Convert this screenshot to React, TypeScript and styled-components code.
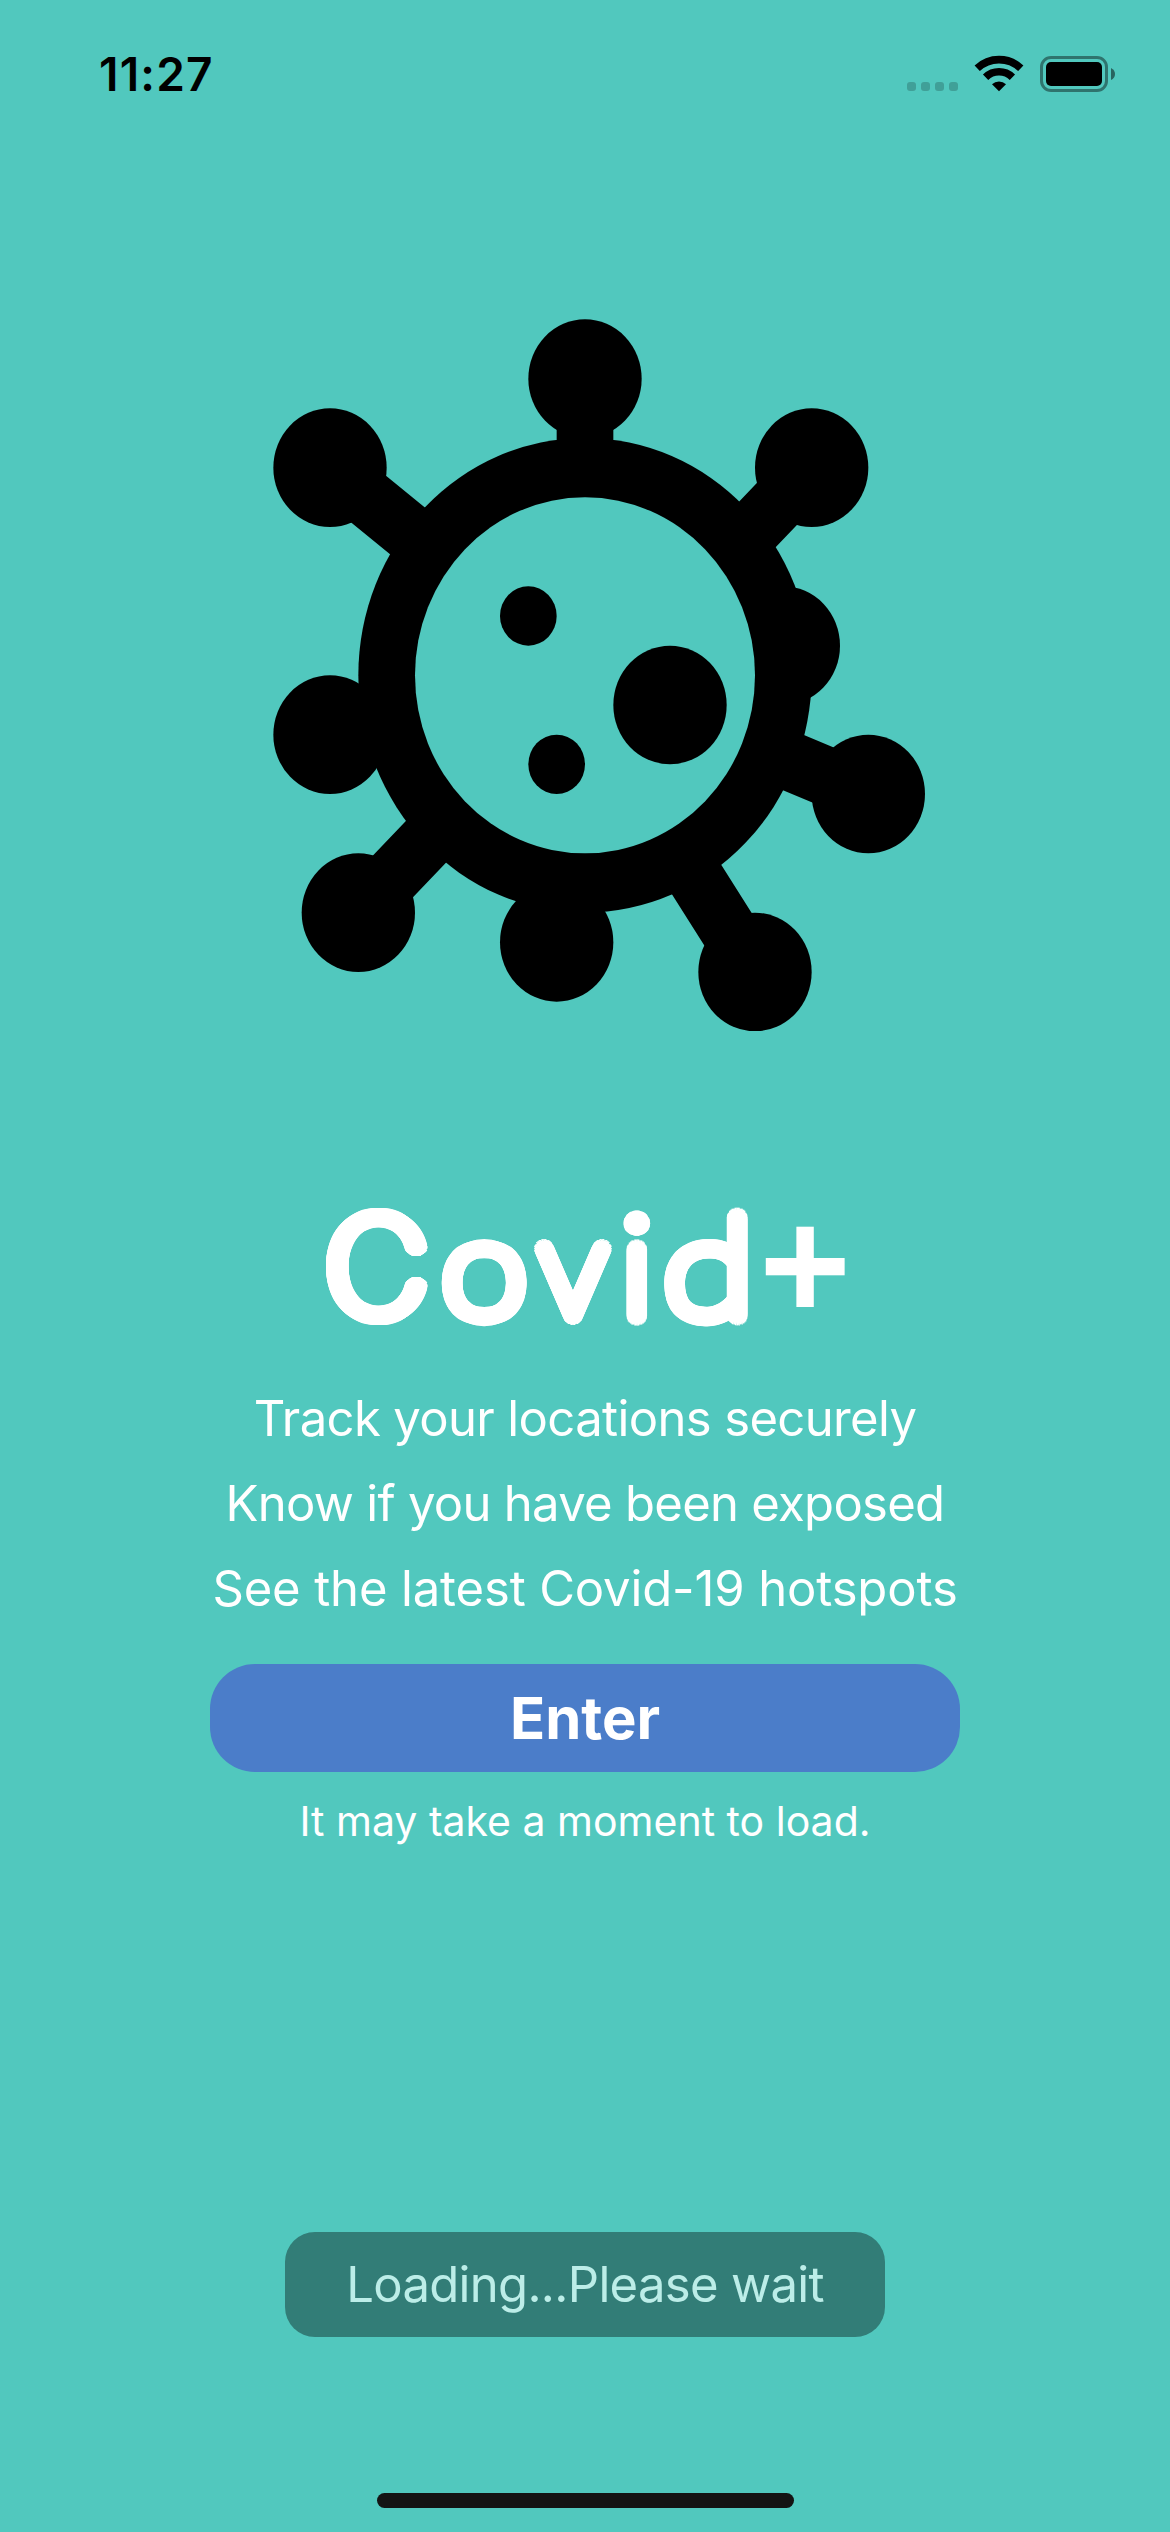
import React from "react";
import styled, { createGlobalStyle } from "styled-components";

const GlobalStyle = createGlobalStyle`
  * { box-sizing: border-box; }
  html, body { margin: 0; padding: 0; background: #51c8be; }
`;

const Screen = styled.main`
  width: 1170px;
  height: 2532px;
  display: flex;
  flex-direction: column;
  align-items: center;
  overflow: hidden;
  background: #51c8be;
  color: #ffffff;
  font-family: Inter, "Liberation Sans", sans-serif;
`;

const StatusBar = styled.header`
  width: 100%;
  height: 148px;
  padding: 45px 54px 0 99px;
  display: flex;
  justify-content: space-between;
  align-items: flex-start;
`;

const Clock = styled.time`
  color: #000000;
  font-size: 46px;
  font-weight: 600;
  line-height: 58px;
  letter-spacing: 1.2px;
`;

const StatusIcons = styled.svg`
  width: 210px;
  height: 40px;
  margin-top: 9px;
`;

const Virus = styled.svg`
  width: 690px;
  height: 712px;
  margin-top: 171px;
  flex: none;
`;

/* Thin strokes grown by an ellipse of shadows give the letters round ends. */
const roundGrow = (rx: number, ry: number) =>
  [1, 0.8, 0.6, 0.4, 0.2]
    .flatMap((k) =>
      Array.from({ length: 36 }, (_, i) => {
        const a = (i / 36) * Math.PI * 2;
        return `${(Math.cos(a) * rx * k).toFixed(2)}px ${(Math.sin(a) * ry * k).toFixed(2)}px 0 #fff`;
      })
    )
    .join(", ");

const Title = styled.h1`
  margin: 146px 0 0;
  height: 170px;
  width: 518px;
  flex: none;
  display: flex;
  align-items: baseline;
  white-space: nowrap;
  font-family: Lato, sans-serif;
  font-size: 138px;
  font-weight: 100;
  line-height: 170px;
`;

const Letter = styled.span<{
  $width: number;
  $gap?: number;
  $stretch?: number;
  $nudge?: number;
  $rx?: number;
  $ry?: number;
}>`
  flex: none;
  display: flex;
  justify-content: center;
  width: ${(p) => p.$width}px;
  margin-left: ${(p) => p.$gap ?? 0}px;
  transform: translateX(${(p) => p.$nudge ?? 0}px) scaleX(${(p) => p.$stretch ?? 1});
  text-shadow: ${(p) => roundGrow(p.$rx ?? 9, p.$ry ?? 9)};
`;

const Capital = styled(Letter)`
  font-family: Inter, sans-serif;
  font-size: 135px;
`;

const Plus = styled.span`
  flex: none;
  display: flex;
  justify-content: center;
  width: 80px;
  margin-left: 17.2px;
  transform: translateY(3px);
  font-family: "Liberation Sans", sans-serif;
  font-weight: 700;
  font-size: 157px;
`;

const Features = styled.ul`
  list-style: none;
  margin: 29px 0 0;
  padding: 0;
  text-align: center;
`;

const Feature = styled.li<{ $track: number }>`
  font-size: 49px;
  line-height: 85px;
  letter-spacing: ${(p) => p.$track}px;
  white-space: nowrap;
`;

const EnterButton = styled.button`
  width: 750px;
  height: 108px;
  margin-top: 33px;
  flex: none;
  border: 0;
  border-radius: 45px;
  background: #4b7dc9;
  color: #ffffff;
  font-family: inherit;
  font-size: 58px;
  font-weight: 700;
  line-height: 108px;
  padding: 0;
`;

const Hint = styled.p`
  margin: 21px 0 0;
  font-size: 41px;
  line-height: 56px;
  white-space: nowrap;
`;

const Toast = styled.div`
  width: 600px;
  height: 105px;
  margin-top: 383px;
  flex: none;
  display: flex;
  align-items: center;
  justify-content: center;
  border-radius: 30px;
  background: #327d77;
  color: #bcede8;
  font-size: 49px;
  letter-spacing: -0.67px;
  white-space: nowrap;
`;

const HomeIndicator = styled.div`
  width: 417px;
  height: 15px;
  margin-top: 156px;
  flex: none;
  border-radius: 8px;
  background: #141414;
`;

const knobs = [
  [0, -10], [-9, -7], [8, -7], [7, -1], [10, 4], [6, 10], [-1, 9], [-8, 8], [-9, 2],
];

const StatusGlyphs = () => (
  <StatusIcons viewBox="906 54 210 40">
    {[907, 921, 935, 949].map((x) => (
      <rect key={x} x={x} y="82" width="9" height="9" rx="3" fill="#000" opacity="0.2" />
    ))}
    <g fill="none" stroke="#000" strokeWidth="7.6">
      <path d="M977.2 68.3A31.7 31.7 0 0 1 1020.8 68.3" />
      <path d="M985.6 77.2A19.3 19.3 0 0 1 1012.4 77.2" />
    </g>
    <path d="M999 91.2L992 84.3A10 10 0 0 1 1006 84.3Z" fill="#000" />
    <rect x="1041.5" y="57.5" width="65" height="33" rx="9.5" fill="none" stroke="#000" strokeOpacity="0.42" strokeWidth="3" />
    <rect x="1046" y="62" width="56" height="24" rx="5" fill="#000" />
    <path d="M1111 68Q1115 70 1115 74T1111 80Z" fill="#000" opacity="0.5" />
  </StatusIcons>
);

export default function App() {
  return (
    <>
      <GlobalStyle />
      <Screen>
        <StatusBar>
          <Clock>11:27</Clock>
          <StatusGlyphs />
        </StatusBar>
        <Virus viewBox="240 319 690 712">
          <g transform="translate(585 675.3) scale(28.333 29.667)">
            <circle r="8" />
            <path
              d="M0-10V-7M-9-7L-5-3.88M8-7L5-4M10 4L6.2 2.48M6 10L3.6 6.37M-8 8L-5 5"
              fill="none"
              stroke="#000"
              strokeWidth="2"
            />
            {knobs.map(([x, y]) => (
              <circle key={`${x},${y}`} cx={x} cy={y} r="2" />
            ))}
            <circle r="6" fill="#51c8be" />
            <circle cx="-2" cy="-2" r="1" />
            <circle cx="-1" cy="3" r="1" />
            <circle cx="3" cy="1" r="2" />
          </g>
        </Virus>
        <Title>
          <Capital $width={101.4} $gap={1} $stretch={1.05} $nudge={-1} $rx={9.3} $ry={8.3}>C</Capital>
          <Letter $width={84.5} $gap={13.2} $stretch={1.118} $rx={8.5} $ry={8.6}>o</Letter>
          <Letter $width={78.1} $gap={7.8}>v</Letter>
          <Letter $width={21.7} $gap={14.5} $stretch={1.04}>i</Letter>
          <Letter $width={82.8} $gap={16.9} $stretch={1.2} $nudge={2} $rx={7.8}>d</Letter>
          <Plus>+</Plus>
        </Title>
        <Features>
          <Feature $track={-0.63}>Track your locations securely</Feature>
          <Feature $track={-0.71}>Know if you have been exposed</Feature>
          <Feature $track={-0.14}>See the latest Covid-19 hotspots</Feature>
        </Features>
        <EnterButton>Enter</EnterButton>
        <Hint>It may take a moment to load.</Hint>
        <Toast>Loading...Please wait</Toast>
        <HomeIndicator />
      </Screen>
    </>
  );
}
